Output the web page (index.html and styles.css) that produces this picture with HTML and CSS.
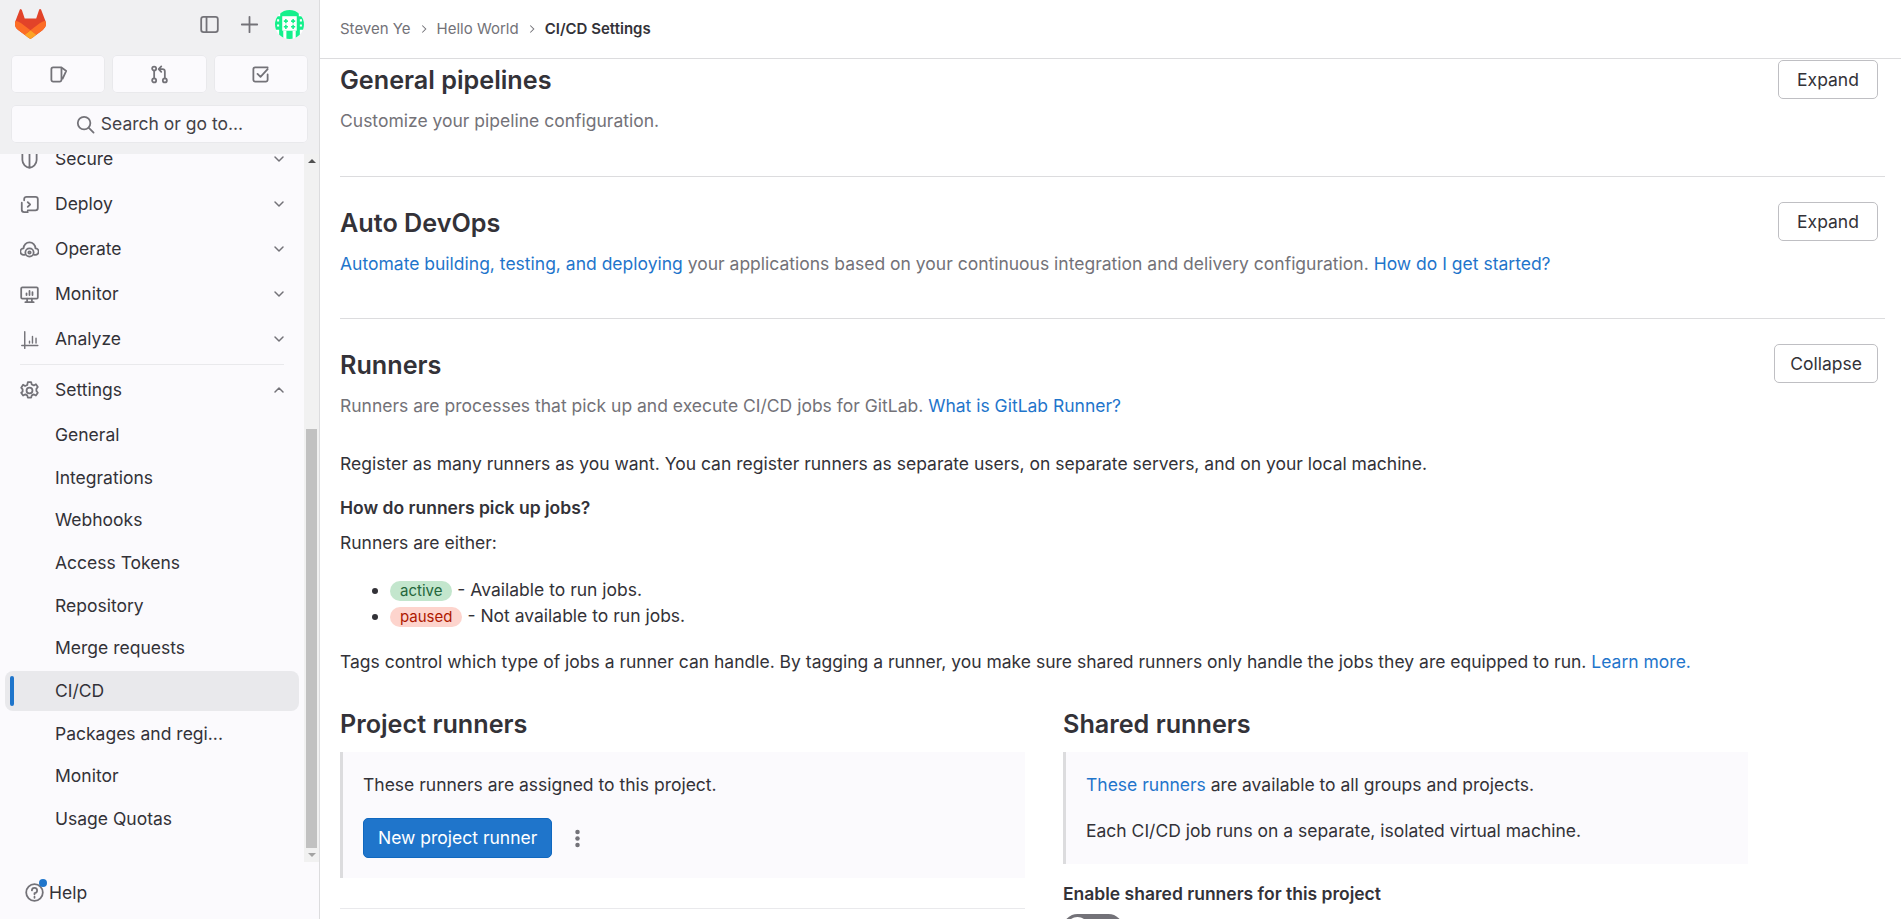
FILE: index.html
```html
<!DOCTYPE html>
<html lang="en">

<head>
    <meta charset="UTF-8">
    <meta name="viewport" content="width=device-width, initial-scale=1.0">
    <title>CI/CD Settings</title>
    <link rel="stylesheet" href="styles.css">
</head>

<body>
    <aside class="sidebar">
        <div class="side-top">
            <div class="top-row">
                <svg class="logo" viewBox="0 0 25 24">
                    <path d="m24.507 9.5-.034-.09L21.082.562a.896.896 0 0 0-1.694.091l-2.29 7.01H7.825L5.535.653a.898.898 0 0 0-1.694-.09L.451 9.411.416 9.5a6.297 6.297 0 0 0 2.09 7.278l.012.01.03.022 5.16 3.867 2.56 1.935 1.554 1.176a1.051 1.051 0 0 0 1.268 0l1.555-1.176 2.56-1.935 5.197-3.89.014-.01A6.297 6.297 0 0 0 24.507 9.5Z" fill="#E24329"/>
                    <path d="m24.507 9.5-.034-.09a11.44 11.44 0 0 0-4.56 2.051l-7.447 5.632 4.742 3.584 5.197-3.89.014-.01A6.297 6.297 0 0 0 24.507 9.5Z" fill="#FC6D26"/>
                    <path d="m7.707 20.677 2.56 1.935 1.555 1.176a1.051 1.051 0 0 0 1.268 0l1.555-1.176 2.56-1.935-4.743-3.584-4.755 3.584Z" fill="#FCA326"/>
                    <path d="M5.01 11.461a11.43 11.43 0 0 0-4.56-2.05L.416 9.5a6.297 6.297 0 0 0 2.09 7.278l.012.01.03.022 5.16 3.867 4.745-3.584-7.444-5.632Z" fill="#FC6D26"/>
                </svg>
                <svg class="icon panel-icon" viewBox="0 0 16 16"><rect x="1" y="1.5" width="14" height="13" rx="2"/><path d="M5.5 1.500v13"/></svg>
                <svg class="icon plus-icon" viewBox="0 0 16 16"><path d="M8 1.500v13M1.500 8h13"/></svg>
                <svg class="avatar" viewBox="0 0 28 28">
                    <clipPath id="avatarClip"><circle cx="14" cy="14" r="14"/></clipPath>
                    <g clip-path="url(#avatarClip)">
                        <rect width="28" height="28" fill="#fff"/>
                        <path d="M5 0h18v6h5v13h-4v9h-4v-8h-3v8h-6v-8H8v8H4v-9H0V6h5z" fill="#14f08c"/>
                        <rect x="7" y="6" width="14" height="14" fill="#fff"/>
                        <path d="M2 9h2v2H2zM24 9h2v2h-2zM2 14h2v2H2zM24 14h2v2h-2z" fill="#fff"/>
                        <path d="M8.500 10h4v1.500h-4zM9.750 8.750h1.500v4h-1.500zM15.500 10h4v1.500h-4zM16.750 8.750h1.500v4h-1.500zM8.500 15.500h4V17h-4zM9.750 14.250h1.500v4h-1.500zM15.500 15.500h4V17h-4zM16.750 14.250h1.500v4h-1.500z" fill="#14f08c"/>
                    </g>
                </svg>
            </div>
            <div class="quick-row">
                <a class="quick-btn">
                    <svg class="icon" viewBox="0 0 16 16"><path d="M10.500 2H3.500A1.500 1.500 0 0 0 2 3.500v9A1.500 1.500 0 0 0 3.500 14H9a1.500 1.500 0 0 0 1.500-1.500V2l4 3-3 6.500"/></svg>
                </a>
                <a class="quick-btn">
                    <svg class="icon" viewBox="0 0 16 16"><circle cx="3.500" cy="3" r="1.700"/><circle cx="3.500" cy="13" r="1.700"/><circle cx="12.500" cy="13" r="1.700"/><path d="M3.500 4.700v6.600M12.500 11.300V5.500A2 2 0 0 0 10.500 3.500H8M9.500 1.200 7.300 3.500l2.200 2.300"/></svg>
                </a>
                <a class="quick-btn">
                    <svg class="icon" viewBox="0 0 16 16"><path d="M14 8v4.500a1.500 1.500 0 0 1-1.500 1.500h-9A1.500 1.500 0 0 1 2 12.500v-9A1.500 1.500 0 0 1 3.500 2H14M5.500 7.500 8 10l6-6.500"/></svg>
                </a>
            </div>
            <a class="search-btn">
                <svg class="icon" viewBox="0 0 16 16"><circle cx="6.800" cy="6.800" r="5.300"/><path d="m10.800 10.800 4 4"/></svg>
                Search or go to...
            </a>
        </div>

        <div class="nav-wrap">
            <nav class="nav-list">
                <a class="nav-item">
                    <svg class="icon" viewBox="0 0 16 16"><path d="M2 2.500v6C2 12 5 14.500 8 15c3-.5 6-3 6-6.500v-6M8 2v13"/></svg>
                    <span>Secure</span>
                    <svg class="chev" viewBox="0 0 16 16"><path d="m4 6 4 4 4-4"/></svg>
                </a>
                <a class="nav-item">
                    <svg class="icon" viewBox="0 0 16 16"><path d="M3.500 4.500V3.500a2 2 0 0 1 2-2h7.500a2 2 0 0 1 2 2v7.500a2 2 0 0 1-2 2H6.500M1.500 6.500v6a2 2 0 0 0 2 2h3M6.500 6l2 2-2 2"/></svg>
                    <span>Deploy</span>
                    <svg class="chev" viewBox="0 0 16 16"><path d="m4 6 4 4 4-4"/></svg>
                </a>
                <a class="nav-item">
                    <svg class="icon" viewBox="0 0 16 16"><path d="M4 12.500H3a2.500 2.500 0 0 1 0-5.500 5 5 0 0 1 10 0 2.500 2.500 0 0 1 0 5.500h-1"/><circle cx="8" cy="10.500" r="3.500"/><circle cx="8" cy="10.500" r="1"/></svg>
                    <span>Operate</span>
                    <svg class="chev" viewBox="0 0 16 16"><path d="m4 6 4 4 4-4"/></svg>
                </a>
                <a class="nav-item">
                    <svg class="icon" viewBox="0 0 16 16"><rect x="1" y="2" width="14" height="9.500" rx="1"/><path d="M4.500 14.500h7M6 11.500v3M10 11.500v3M5.500 8.500V7M8 8.500V5M10.500 8.500V6"/></svg>
                    <span>Monitor</span>
                    <svg class="chev" viewBox="0 0 16 16"><path d="m4 6 4 4 4-4"/></svg>
                </a>
                <a class="nav-item">
                    <svg class="icon icon-thin" viewBox="0 0 16 16"><path d="M4 1.500v14M1.500 13h13.500M8 9.500V11M10.500 5.500V11M13.500 7v4"/></svg>
                    <span>Analyze</span>
                    <svg class="chev" viewBox="0 0 16 16"><path d="m4 6 4 4 4-4"/></svg>
                </a>
                <div class="nav-divider"></div>
                <a class="nav-item nav-open">
                    <svg class="icon" viewBox="0 0 16 16"><circle cx="8" cy="8" r="2.500"/><path d="M6.600 1h2.800l.5 1.900 1.800.8 1.700-1 1.600 2.400-1.200 1.500v1.800l1.200 1.500-1.600 2.400-1.700-1-1.800.8-.5 1.900H6.600l-.5-1.900-1.800-.8-1.700 1-1.600-2.400L2.200 8.900V7.100L1 5.600l1.600-2.400 1.700 1 1.800-.8z"/></svg>
                    <span>Settings</span>
                    <svg class="chev" viewBox="0 0 16 16"><path d="m4 10 4-4 4 4"/></svg>
                </a>
                <a class="sub-item">General</a>
                <a class="sub-item">Integrations</a>
                <a class="sub-item">Webhooks</a>
                <a class="sub-item">Access Tokens</a>
                <a class="sub-item">Repository</a>
                <a class="sub-item">Merge requests</a>
                <a class="sub-item sub-active">CI/CD</a>
                <a class="sub-item">Packages and regi...</a>
                <a class="sub-item">Monitor</a>
                <a class="sub-item">Usage Quotas</a>
            </nav>
            <div class="scrollbar">
                <span class="arrow-up"></span>
                <div class="thumb-space"></div>
                <div class="thumb"></div>
                <span class="arrow-down"></span>
            </div>
        </div>

        <div class="side-foot">
            <div class="help-icon">
                <svg class="icon" viewBox="0 0 16 16"><circle cx="8" cy="8" r="7"/><path d="M5.800 6.200A2.200 2.200 0 1 1 8 8.500v1M8 11.500v1"/></svg>
                <span class="help-dot"></span>
            </div>
            <span>Help</span>
        </div>
    </aside>

    <div class="main">
        <header class="topbar">
            <a class="crumb">Steven Ye</a>
            <svg class="crumb-sep" viewBox="0 0 16 16"><path d="m6 4 4 4-4 4"/></svg>
            <a class="crumb">Hello World</a>
            <svg class="crumb-sep" viewBox="0 0 16 16"><path d="m6 4 4 4-4 4"/></svg>
            <strong class="crumb-now">CI/CD Settings</strong>
        </header>

        <div class="content">
            <section class="block block-first">
                <div class="block-head">
                    <div>
                        <h2>General pipelines</h2>
                        <p class="muted">Customize your pipeline configuration.</p>
                    </div>
                    <button class="btn">Expand</button>
                </div>
            </section>

            <section class="block">
                <div class="block-head">
                    <div>
                        <h2>Auto DevOps</h2>
                        <p class="muted"><a class="link">Automate building, testing, and deploying</a> your applications based on your continuous integration and delivery configuration. <a class="link">How do I get started?</a></p>
                    </div>
                    <button class="btn">Expand</button>
                </div>
            </section>

            <section class="block block-open">
                <div class="block-head">
                    <div>
                        <h2>Runners</h2>
                        <p class="muted">Runners are processes that pick up and execute CI/CD jobs for GitLab. <a class="link">What is GitLab Runner?</a></p>
                    </div>
                    <button class="btn">Collapse</button>
                </div>

                <p class="intro">Register as many runners as you want. You can register runners as separate users, on separate servers, and on your local machine.</p>
                <p class="question">How do runners pick up jobs?</p>
                <p class="either">Runners are either:</p>
                <ul class="states">
                    <li><span class="badge badge-active">active</span> - Available to run jobs.</li>
                    <li><span class="badge badge-paused">paused</span> - Not available to run jobs.</li>
                </ul>
                <p class="tags">Tags control which type of jobs a runner can handle. By tagging a runner, you make sure shared runners only handle the jobs they are equipped to run. <a class="link">Learn more.</a></p>

                <div class="runner-cols">
                    <div class="runner-col">
                        <h2>Project runners</h2>
                        <div class="note">
                            <p>These runners are assigned to this project.</p>
                            <div class="note-actions">
                                <button class="btn-primary">New project runner</button>
                                <svg class="kebab" viewBox="0 0 16 16"><circle cx="8" cy="2.500" r="1.900"/><circle cx="8" cy="8" r="1.900"/><circle cx="8" cy="13.500" r="1.900"/></svg>
                            </div>
                        </div>
                        <div class="col-rule"></div>
                    </div>
                    <div class="runner-col">
                        <h2>Shared runners</h2>
                        <div class="note">
                            <p><a class="link">These runners</a> are available to all groups and projects.</p>
                            <p class="note-second">Each CI/CD job runs on a separate, isolated virtual machine.</p>
                        </div>
                        <p class="enable">Enable shared runners for this project</p>
                        <div class="toggle"><span class="knob"></span></div>
                    </div>
                </div>
            </section>
        </div>
    </div>
</body>

</html>
```

FILE: styles.css
```css
* {
    box-sizing: border-box;
}

html,
body {
    height: 100%;
}

body {
    margin: 0;
    display: flex;
    height: 919px;
    overflow: hidden;
    background-color: white;
    color: #333238;
    font-family: Inter, "Noto Sans", sans-serif;
    font-size: 17.5px;
    line-height: 24px;
}

p,
h2,
ul {
    margin: 0;
}

.icon {
    width: 19px;
    height: 19px;
    flex: none;
    fill: none;
    stroke: #737278;
    stroke-width: 1.5;
    stroke-linecap: round;
    stroke-linejoin: round;
}

.icon-thin {
    stroke-width: 1.2;
}

/* sidebar */
.sidebar {
    width: 320px;
    flex: none;
    display: flex;
    flex-direction: column;
    background-color: #fbfafd;
    border-right: 1px solid #dcdcde;
}

.side-top {
    height: 154px;
    flex: none;
    padding: 0 11px;
    background-color: #f0f0f2;
}

.top-row {
    height: 55px;
    display: flex;
    align-items: center;
}

.logo {
    width: 31px;
    height: 30px;
    margin-left: 4px;
    margin-top: -8px;
}

.panel-icon {
    margin-left: 154px;
    margin-top: -7px;
}

.plus-icon {
    margin-left: 21px;
    margin-top: -7px;
}

.avatar {
    width: 29px;
    height: 29px;
    margin-left: 16px;
    margin-top: -7px;
}

.quick-row {
    display: flex;
    gap: 7px;
}

.quick-btn,
.search-btn {
    flex: 1;
    height: 38px;
    display: flex;
    align-items: center;
    justify-content: center;
    background-color: #fbfafd;
    border-radius: 5px;
    box-shadow: 0 0 0 1px #e9e9ec inset;
}

.search-btn {
    margin-top: 12px;
    gap: 6px;
    color: #434248;
}

.nav-wrap {
    flex: 1;
    min-height: 0;
    display: flex;
    overflow: hidden;
}

.nav-list {
    flex: 1;
    padding: 0 5px;
    margin-top: -15px;
}

.nav-item {
    height: 40px;
    margin-bottom: 5px;
    display: flex;
    align-items: center;
    padding: 0 12px 0 15px;
}

.nav-item span {
    margin-left: 16px;
    flex: 1;
}

.chev {
    width: 16px;
    height: 16px;
    fill: none;
    stroke: #737278;
    stroke-width: 1.5;
    stroke-linecap: round;
    stroke-linejoin: round;
}

.nav-divider {
    height: 1px;
    margin: 0 15px;
    background-color: #e9e9ec;
}

.nav-open {
    margin-top: 5px;
    margin-bottom: 5px;
}

.sub-item {
    height: 40px;
    margin-bottom: 2.67px;
    display: flex;
    align-items: center;
    padding-left: 50px;
    border-radius: 8px;
}

.sub-active {
    position: relative;
    background-color: #e9e9ec;
}

.sub-active::before {
    content: "";
    position: absolute;
    left: 5px;
    top: 5px;
    bottom: 5px;
    width: 4px;
    border-radius: 2px;
    background-color: #1f75cb;
}

.scrollbar {
    width: 15px;
    flex: none;
    display: flex;
    flex-direction: column;
    align-items: center;
    background-color: #f1f1f1;
}

.arrow-up,
.arrow-down {
    height: 15px;
    width: 0;
    flex: none;
    border-left: 4px solid transparent;
    border-right: 4px solid transparent;
}

.arrow-up {
    height: 0;
    margin: 5px 0 5px;
    border-bottom: 4px solid #505050;
}

.arrow-down {
    height: 0;
    margin: 5px 0 5px;
    border-top: 4px solid #a3a3a3;
}

.thumb-space {
    height: 261px;
    flex: none;
}

.thumb {
    flex: 1;
    width: 11px;
    background-color: #c1c1c1;
}

.side-foot {
    height: 57px;
    flex: none;
    display: flex;
    align-items: center;
    padding-left: 25px;
    gap: 5px;
    padding-top: 4px;
}

.help-icon {
    position: relative;
    display: flex;
}

.help-dot {
    position: absolute;
    right: -3px;
    top: -4px;
    width: 8px;
    height: 8px;
    border-radius: 50%;
    background-color: #1f75cb;
}

/* main */
.main {
    flex: 1;
    min-width: 0;
    display: flex;
    flex-direction: column;
}

.topbar {
    height: 59px;
    flex: none;
    display: flex;
    align-items: center;
    padding-left: 20px;
    font-size: 15px;
    border-bottom: 1px solid #dcdcde;
}

.crumb {
    color: #737278;
}

.crumb-sep {
    width: 14px;
    height: 14px;
    margin: 0 6px;
    fill: none;
    stroke: #737278;
    stroke-width: 1.2;
}

.crumb-now {
    font-weight: 600;
}

.content {
    flex: 1;
    min-height: 0;
    overflow: hidden;
    padding: 0 16px 0 20px;
}

.block {
    padding: 25px 0 0;
    height: 142px;
    border-bottom: 1px solid #dcdcde;
}

.block-first {
    padding-top: 1px;
    height: 118px;
}

.block-open {
    height: auto;
    border-bottom: 0;
}

.block-head {
    display: flex;
    justify-content: space-between;
    align-items: flex-start;
    padding-right: 7px;
}

h2 {
    margin-top: 5px;
    font-size: 25.2px;
    line-height: 30px;
    font-weight: 600;
}

.block-head h2 {
    margin-top: 6px;
}

.block-first .block-head h2 {
    margin-top: 5px;
}

.muted {
    margin-top: 14px;
    color: #737278;
}

.link {
    color: #1f75cb;
}

.btn {
    height: 39px;
    min-width: 100px;
    padding: 0 15px;
    background-color: white;
    border: 1px solid #bfbfc3;
    border-radius: 5px;
    color: #333238;
    font: inherit;
}

.intro {
    margin-top: 34px;
}

.question {
    margin-top: 20px;
    font-weight: 600;
}

.either {
    margin-top: 11px;
}

.states {
    margin-top: 23px;
    padding-left: 50px;
}

.states li {
    height: 26px;
}

.badge {
    display: inline-block;
    height: 20px;
    padding: 0 10px;
    border-radius: 10px;
    font-size: 15px;
    line-height: 20px;
}

.badge-active {
    background-color: #c3e6cd;
    color: #24663b;
}

.badge-paused {
    background-color: #fdd4cd;
    color: #ae1800;
}

.tags {
    margin-top: 20px;
}

.runner-cols {
    display: flex;
    gap: 38px;
    margin-top: 30px;
}

.runner-col {
    width: 685px;
}

.note {
    margin-top: 13px;
    padding: 21px 20px 20px;
    background-color: #fbfafd;
    border-left: 3px solid #dcdcde;
}

.note-actions {
    display: flex;
    align-items: center;
    margin-top: 21px;
}

.btn-primary {
    height: 40px;
    padding: 0 14px;
    background-color: #1f75cb;
    border: 1px solid #1068bf;
    border-radius: 5px;
    color: white;
    font: inherit;
}

.kebab {
    width: 19px;
    height: 19px;
    margin-left: 16px;
    fill: #737278;
}

.col-rule {
    height: 1px;
    margin-top: 30px;
    background-color: #e9e9ec;
}

.note-second {
    margin-top: 22px;
    margin-bottom: 1px;
}

.enable {
    margin-top: 18px;
    font-weight: 600;
}

.toggle {
    width: 60px;
    height: 29px;
    margin-top: 8px;
    padding: 3px;
    border-radius: 15px;
    background-color: #737278;
}

.knob {
    display: block;
    width: 23px;
    height: 23px;
    border-radius: 50%;
    background-color: white;
}
```
